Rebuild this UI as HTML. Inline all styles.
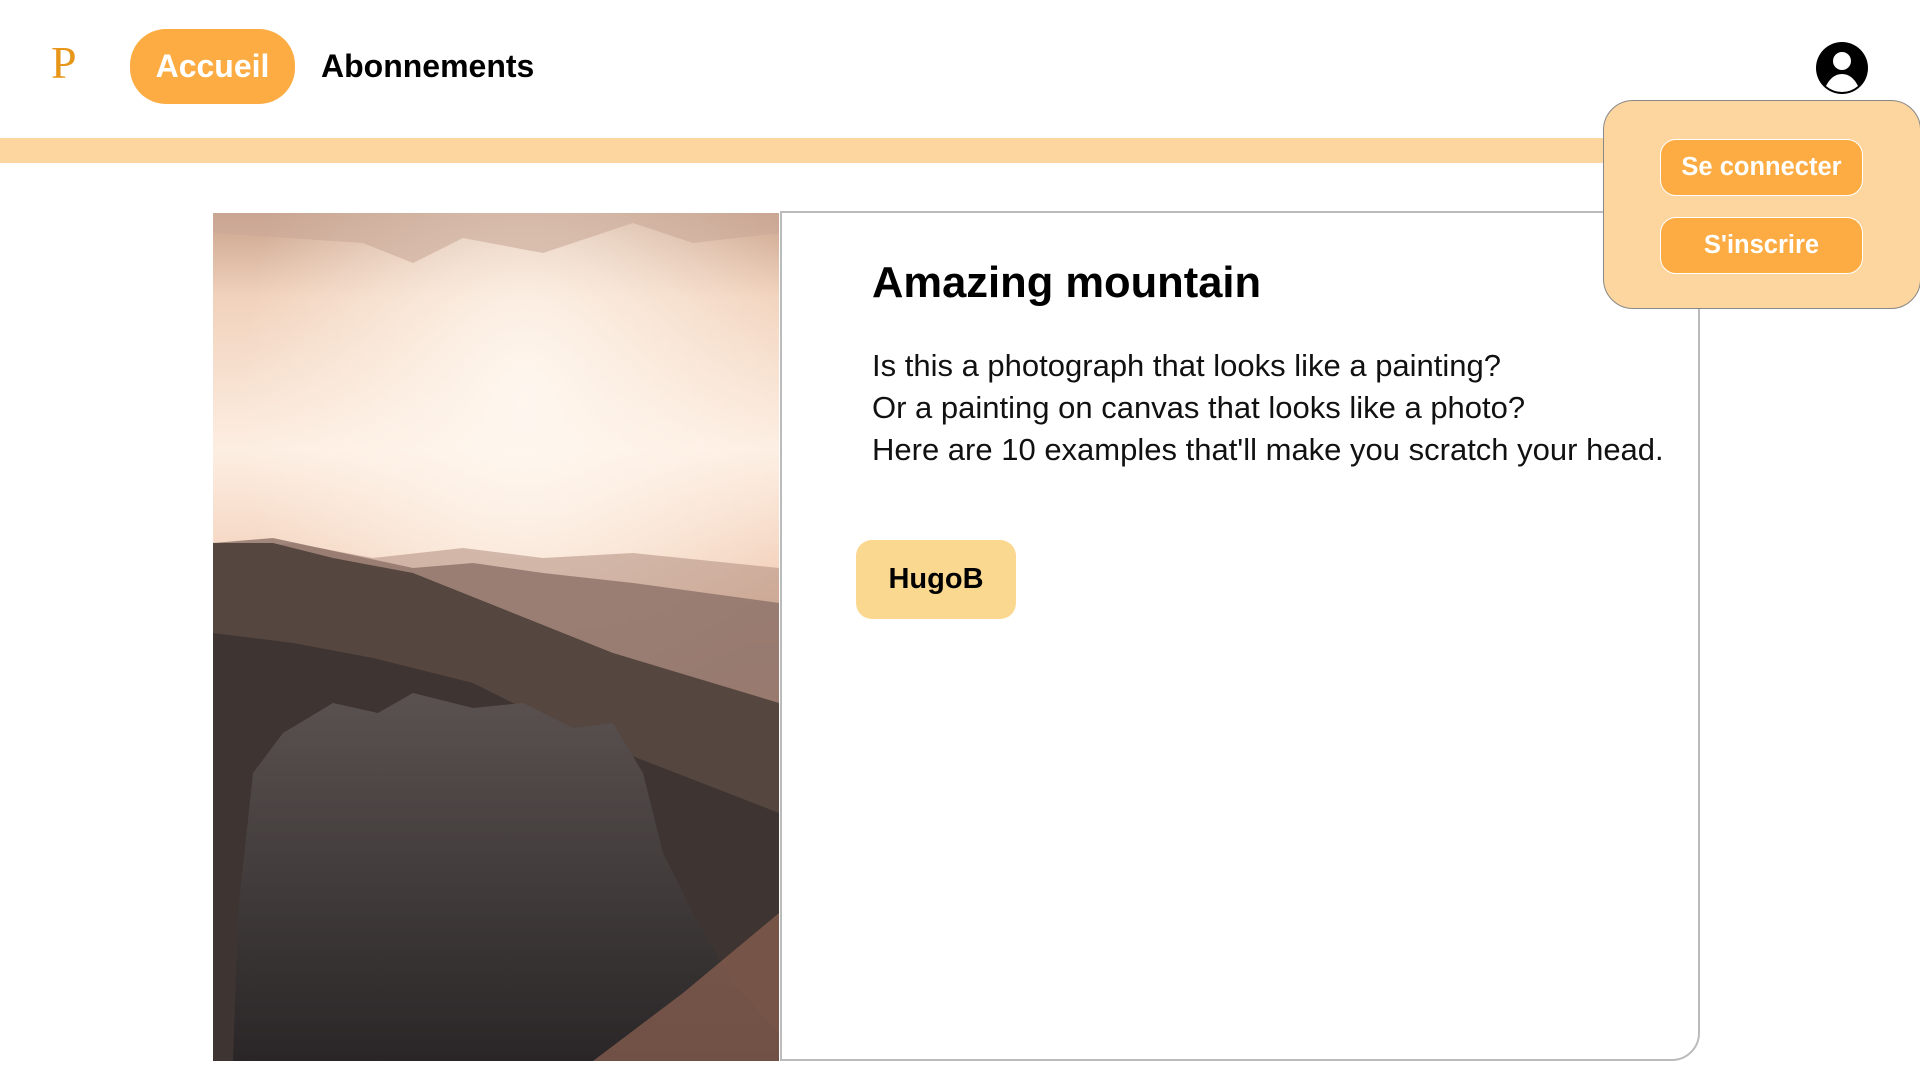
<!DOCTYPE html>
<html><head><meta charset="utf-8"><style>
*{margin:0;padding:0;box-sizing:border-box}
body{width:1920px;height:1080px;background:#fff;position:relative;overflow:hidden;font-family:"Liberation Sans",sans-serif}
.abs{position:absolute}
.logo{left:51px;top:36px;font-family:"Liberation Serif",serif;font-size:46px;color:#e8961a}
.acc{left:130px;top:29px;width:165px;height:75px;background:#fcac42;border-radius:36px;color:#fff;font-weight:bold;font-size:32px;display:flex;align-items:center;justify-content:center}
.abo{left:321px;top:29px;height:75px;display:flex;align-items:center;font-weight:bold;font-size:32px;color:#000}
.band{left:0;top:138px;width:1620px;height:25px;background:#fdd59e}
.pop{left:1603px;top:100px;width:318px;height:209px;background:#fdd59e;border:1px solid #888;border-radius:30px}
.btn{left:1660px;width:203px;height:57px;background:#fcac42;border:1px solid #fff;border-radius:16px;color:#fff;font-weight:bold;font-size:25.5px;display:flex;align-items:center;justify-content:center}
.card{left:780px;top:211px;width:920px;height:850px;border:2px solid #bbb;border-radius:0 0 28px 0}
.title{left:872px;top:259px;font-size:43.5px;font-weight:bold;color:#000}
.body{left:872px;top:345px;font-size:31px;line-height:42px;color:#111}
.hugo{left:856px;top:540px;width:160px;height:79px;background:#fbd890;border-radius:16px;font-weight:bold;font-size:29px;display:flex;align-items:center;justify-content:center;color:#000}
</style></head><body>
<div class="abs logo">P</div>
<div class="abs acc">Accueil</div>
<div class="abs abo">Abonnements</div>
<div class="abs band"></div>
<div class="abs card"></div>
<svg class="abs" style="left:213px;top:213px" width="566" height="848" viewBox="0 0 566 848">
<defs>
<linearGradient id="sky" x1="0" y1="0" x2="0" y2="1">
<stop offset="0" stop-color="#c9a38c"/><stop offset="0.1" stop-color="#f1d2bc"/><stop offset="0.28" stop-color="#fdeee2"/><stop offset="0.45" stop-color="#f1cdb6"/><stop offset="0.6" stop-color="#d9ad98"/><stop offset="1" stop-color="#b08a7a"/>
</linearGradient>
<radialGradient id="sun" cx="0.55" cy="0.22" r="0.5"><stop offset="0" stop-color="#fff8f0" stop-opacity="0.95"/><stop offset="1" stop-color="#fff6ec" stop-opacity="0"/></radialGradient>
<linearGradient id="rock" x1="0" y1="0" x2="0" y2="1"><stop offset="0" stop-color="#5a5250"/><stop offset="1" stop-color="#2a2627"/></linearGradient>
</defs>
<rect width="566" height="848" fill="url(#sky)"/>
<rect width="566" height="848" fill="url(#sun)"/>
<path d="M0 0 L566 0 L566 20 L480 30 L420 10 L330 40 L250 25 L200 50 L150 30 L0 20Z" fill="#c9a898" opacity="0.6"/>
<path d="M0 340 L80 330 L160 345 L250 335 L330 345 L420 340 L566 355 L566 848 L0 848Z" fill="#b08e80" opacity="0.55"/>
<path d="M0 330 L60 325 L130 340 L200 355 L260 350 L330 360 L420 370 L566 390 L566 848 L0 848Z" fill="#8c7068" opacity="0.8"/>
<path d="M0 330 L60 330 L120 345 L200 360 L300 400 L400 440 L566 490 L566 848 L0 848Z" fill="#55463f"/>
<path d="M0 420 L80 430 L160 445 L260 470 L360 520 L566 600 L566 848 L0 848Z" fill="#3e3431"/>
<path d="M20 848 L25 700 L40 560 L70 520 L120 490 L165 500 L200 480 L260 495 L310 490 L360 515 L400 510 L430 560 L450 640 L480 700 L520 770 L566 820 L566 848Z" fill="url(#rock)"/>
<path d="M380 848 L470 780 L566 700 L566 848Z" fill="#8a6050" opacity="0.75"/>
</svg>
<div class="abs title">Amazing mountain</div>
<div class="abs body">Is this a photograph that looks like a painting?<br>Or a painting on canvas that looks like a photo?<br>Here are 10 examples that'll make you scratch your head.</div>
<div class="abs hugo">HugoB</div>
<div class="abs pop"></div>
<div class="abs btn" style="top:139px">Se connecter</div>
<div class="abs btn" style="top:217px">S'inscrire</div>
<svg class="abs" style="left:1815px;top:41px" width="54" height="54" viewBox="0 0 54 54">
<circle cx="27" cy="27" r="26" fill="#000"/>
<circle cx="27" cy="20" r="9" fill="#fff"/>
<path d="M11 45 Q17 33 27 33 Q37 33 43 45 Q36 51 27 51 Q18 51 11 45Z" fill="#fff"/>
</svg>
</body></html>
